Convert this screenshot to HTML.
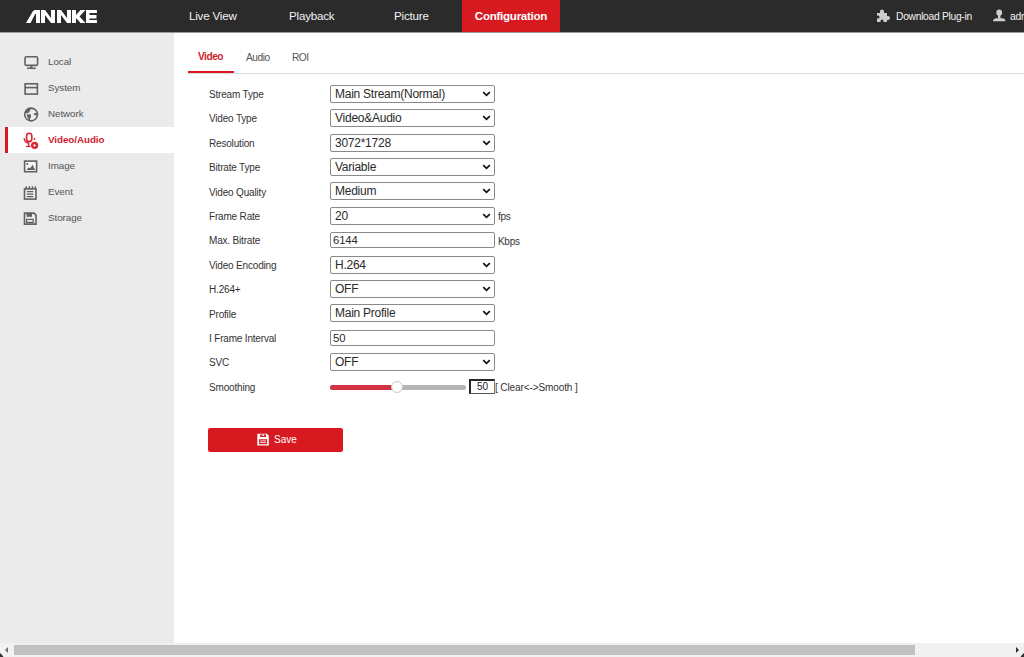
<!DOCTYPE html>
<html><head><meta charset="utf-8">
<style>
*{margin:0;padding:0;box-sizing:border-box}
html,body{width:1024px;height:657px;overflow:hidden;background:#fff;font-family:"Liberation Sans",sans-serif}
.abs{position:absolute}
#hdr{position:absolute;left:0;top:0;width:1024px;height:32px;background:#2b2b2b}
.nav{position:absolute;top:0;height:32px;line-height:31px;font-size:11.6px;letter-spacing:-0.2px;color:#f2f2f2;white-space:nowrap}
#cfg{position:absolute;left:462px;top:0;width:98px;height:32px;background:#d71920;color:#fff;font-weight:bold;font-size:11.6px;letter-spacing:-0.28px;line-height:31px;text-align:center}
#side{position:absolute;left:0;top:32px;width:174px;height:611px;background:#ebebeb}
.si{position:absolute;left:5px;width:169px;height:26px}
.si .t{position:absolute;left:43px;top:0;line-height:26px;font-size:9.8px;letter-spacing:-0.05px;color:#555}
.si.act{background:#fff;border-left:3px solid #d71920}
.si.act .t{color:#d0202e;left:40px;font-weight:bold}
.tab{position:absolute;font-size:10.2px;letter-spacing:-0.5px;color:#555;white-space:nowrap}
.lbl{position:absolute;left:209px;font-size:10px;letter-spacing:-0.18px;color:#333;white-space:nowrap}
.sel{position:absolute;left:330px;width:165px;height:18px;border:1px solid #8a8a8a;border-radius:2px;background:#fff}
.sel span{position:absolute;left:4px;top:0;line-height:16px;font-size:12px;letter-spacing:-0.25px;color:#2a2a2a;white-space:nowrap}
.sel svg{position:absolute;right:3px;top:4.5px}
.inp{position:absolute;left:330px;width:165px;height:16px;border:1px solid #8a8a8a;border-radius:2px;background:#fff}
.inp span{position:absolute;left:2px;top:0px;line-height:14px;font-size:11.3px;letter-spacing:-0.1px;color:#2a2a2a}
.unit{position:absolute;left:498px;font-size:10px;letter-spacing:-0.3px;color:#333;white-space:nowrap}
</style></head><body>
<div id="hdr">
  <svg class="abs" style="left:0;top:0" width="110" height="32" viewBox="0 0 110 32">
    <g fill="#fff">
      <path d="M26 23 L33 11 Q34 10 35.5 10 L40 10 L40 23 L36 23 L36 14 L35.2 14 L30.5 23 Z"/>
      <path d="M41 10 L45 10 L51 18 L51 10 L55 10 L55 23 L51 23 L45 15 L45 23 L41 23 Z"/>
      <path d="M57 10 L61 10 L67 18 L67 10 L71 10 L71 23 L67 23 L61 15 L61 23 L57 23 Z"/>
      <path d="M72 10 L76 10 L76 15 L80.5 10 L85.5 10 L79.5 16.5 L85.5 23 L80.5 23 L76 18 L76 23 L72 23 Z"/>
      <path d="M86 10 L97 10 L97 13 L89.5 13 L89.5 15 L96.5 15 L96.5 18.5 L89.5 18.5 L89.5 20 L97 20 L97 23 L86 23 Z"/>
    </g>
  </svg>
  <div class="nav" style="left:189px">Live View</div>
  <div class="nav" style="left:289px">Playback</div>
  <div class="nav" style="left:394px">Picture</div>
  <div id="cfg">Configuration</div>
  <svg class="abs" style="left:876px;top:9px" width="15" height="14" viewBox="0 0 15 14">
    <path fill="#cdcdcd" d="M1 4 H4 V2.5 A2 2 0 0 1 8 2.5 V4 H11 V7 H12 A2 2 0 0 1 12 11 H11 V13 H7.5 V12 A1.5 1.5 0 0 0 4.5 12 V13 H1 V9.5 H2 A1.5 1.5 0 0 0 2 6.5 H1 Z"/>
  </svg>
  <div class="nav" style="left:896px;font-size:10.3px;letter-spacing:-0.3px;line-height:33px">Download Plug-in</div>
  <svg class="abs" style="left:992px;top:9px" width="15" height="14" viewBox="0 0 15 14">
    <ellipse cx="7.2" cy="3.6" rx="2.9" ry="3.2" fill="#cfcfcf"/><rect x="6" y="5" width="2.4" height="4.5" fill="#cfcfcf"/><path fill="#cfcfcf" d="M1 12.2 Q1 9.6 4.5 9.2 L10 9.2 Q13.4 9.6 13.4 12.2 Z"/>
  </svg>
  <div class="nav" style="left:1010px;font-size:10.3px;line-height:33px">admin</div>
</div>
<div id="side">
  <div class="si" style="top:17px"><div class="t">Local</div></div>
  <div class="si" style="top:43px"><div class="t">System</div></div>
  <div class="si" style="top:69px"><div class="t">Network</div></div>
  <div class="si act" style="top:95px"><div class="t">Video/Audio</div></div>
  <div class="si" style="top:121px"><div class="t">Image</div></div>
  <div class="si" style="top:147px"><div class="t">Event</div></div>
  <div class="si" style="top:173px"><div class="t">Storage</div></div>
</div>
<svg class="abs" style="left:0;top:0" width="60" height="240" viewBox="0 0 60 240">
  <g fill="none" stroke="#655f5f" stroke-width="1.6">
    <rect x="25" y="56.8" width="12.6" height="8.6" rx="1.5"/>
    <path d="M31.4 65.4 V68 " stroke-width="2"/><path d="M27 68.3 H35.8" stroke-width="1.5"/>
    <rect x="25.1" y="83.8" width="12.3" height="10.3"/>
    <path d="M25.1 87.6 H37.4"/>
    <circle cx="31.1" cy="114.5" r="6.4"/>
    <rect x="24.6" y="161.1" width="12" height="10.6" fill="#f6f6f6"/>
    <rect x="24.5" y="188.9" width="11.5" height="10.2"/>
    <path d="M26.9 191.6 H33.2 M26.9 194.2 H33.2 M26.9 196.7 H33.2" stroke-width="1.2"/>
    <path d="M24.5 213.1 H34 L36 215.1 V224.1 H24.5 Z"/>
    <rect x="26.6" y="219.4" width="6.6" height="3" stroke-width="1.2"/>
  </g>
  <g fill="#655f5f">
    <path d="M25.3 112.8 Q25.5 109 28.5 108 L31.2 107.8 L30.6 109.6 L29.3 111.9 L27.6 113.4 Z"/>
    <path d="M26.8 114.5 L30.8 114.2 L31.1 116.8 L30.1 118.5 L29.8 120.9 L28.6 120.9 L28.2 118.3 L27 116.6 Z"/>
    <path d="M33.5 114.2 L35 113 L37.6 113 L37.6 115.4 L35.2 115.2 Z"/>
    <path d="M26.6 170 L28.6 167.2 L30.2 168.2 L32.6 164.8 L35.2 170 Z"/>
    <circle cx="27.3" cy="163.9" r="1"/>
    <path d="M25.5 186.2 h1.4 v2.7 h-1.4 Z M28.6 186.2 h1.4 v2.7 h-1.4 Z M31.7 186.2 h1.4 v2.7 h-1.4 Z M34.6 186.2 h1.4 v2.7 h-1.4 Z"/>
    <path d="M26.6 213.2 H32 V216.8 H26.6 Z"/>
  </g>
  <g fill="none" stroke="#d9262e">
    <rect x="26.6" y="133.2" width="5.2" height="8.4" rx="2.6" stroke-width="1.6"/>
    <path d="M24.2 138.3 Q24.4 142.6 28.8 143" stroke-width="1.5"/>
    <path d="M28.6 142.8 V146.2" stroke-width="1.5"/>
    <path d="M25.9 146.5 H30.6" stroke-width="1.2"/>
  </g>
  <g fill="#d9262e">
    <circle cx="34.4" cy="139" r="0.9"/>
    <circle cx="34.6" cy="145.3" r="3.6"/>
  </g>
  <path d="M33.6 143.8 L36.3 145.4 L33.6 147 Z" fill="#fff"/>
</svg>
<div class="tab" style="left:198px;top:51px;color:#d0202e;font-weight:bold">Video</div>
<div class="tab" style="left:246px;top:52px">Audio</div>
<div class="tab" style="left:292px;top:52px">ROI</div>
<div class="abs" style="left:188px;top:73px;width:836px;height:1px;background:#dcdcdc"></div>
<div class="abs" style="left:188px;top:71px;width:46px;height:2px;background:#d71920"></div>
<div class="lbl" style="top:89.00px">Stream Type</div>
<div class="sel" style="top:85px"><span>Main Stream(Normal)</span><svg width="9" height="6" viewBox="0 0 9 6"><path d="M1.2 1.2 L4.5 4.3 L7.8 1.2" fill="none" stroke="#111" stroke-width="1.7"/></svg></div>
<div class="lbl" style="top:113.39px">Video Type</div>
<div class="sel" style="top:109px"><span>Video&amp;Audio</span><svg width="9" height="6" viewBox="0 0 9 6"><path d="M1.2 1.2 L4.5 4.3 L7.8 1.2" fill="none" stroke="#111" stroke-width="1.7"/></svg></div>
<div class="lbl" style="top:137.78px">Resolution</div>
<div class="sel" style="top:134px"><span>3072*1728</span><svg width="9" height="6" viewBox="0 0 9 6"><path d="M1.2 1.2 L4.5 4.3 L7.8 1.2" fill="none" stroke="#111" stroke-width="1.7"/></svg></div>
<div class="lbl" style="top:162.17px">Bitrate Type</div>
<div class="sel" style="top:158px"><span>Variable</span><svg width="9" height="6" viewBox="0 0 9 6"><path d="M1.2 1.2 L4.5 4.3 L7.8 1.2" fill="none" stroke="#111" stroke-width="1.7"/></svg></div>
<div class="lbl" style="top:186.56px">Video Quality</div>
<div class="sel" style="top:182px"><span>Medium</span><svg width="9" height="6" viewBox="0 0 9 6"><path d="M1.2 1.2 L4.5 4.3 L7.8 1.2" fill="none" stroke="#111" stroke-width="1.7"/></svg></div>
<div class="lbl" style="top:210.95px">Frame Rate</div>
<div class="sel" style="top:207px"><span>20</span><svg width="9" height="6" viewBox="0 0 9 6"><path d="M1.2 1.2 L4.5 4.3 L7.8 1.2" fill="none" stroke="#111" stroke-width="1.7"/></svg></div>
<div class="lbl" style="top:235.34px">Max. Bitrate</div>
<div class="inp" style="top:232px"><span>6144</span></div>
<div class="lbl" style="top:259.73px">Video Encoding</div>
<div class="sel" style="top:256px"><span>H.264</span><svg width="9" height="6" viewBox="0 0 9 6"><path d="M1.2 1.2 L4.5 4.3 L7.8 1.2" fill="none" stroke="#111" stroke-width="1.7"/></svg></div>
<div class="lbl" style="top:284.12px">H.264+</div>
<div class="sel" style="top:280px"><span>OFF</span><svg width="9" height="6" viewBox="0 0 9 6"><path d="M1.2 1.2 L4.5 4.3 L7.8 1.2" fill="none" stroke="#111" stroke-width="1.7"/></svg></div>
<div class="lbl" style="top:308.51px">Profile</div>
<div class="sel" style="top:304px"><span>Main Profile</span><svg width="9" height="6" viewBox="0 0 9 6"><path d="M1.2 1.2 L4.5 4.3 L7.8 1.2" fill="none" stroke="#111" stroke-width="1.7"/></svg></div>
<div class="lbl" style="top:332.90px">I Frame Interval</div>
<div class="inp" style="top:330px"><span>50</span></div>
<div class="lbl" style="top:357.29px">SVC</div>
<div class="sel" style="top:353px"><span>OFF</span><svg width="9" height="6" viewBox="0 0 9 6"><path d="M1.2 1.2 L4.5 4.3 L7.8 1.2" fill="none" stroke="#111" stroke-width="1.7"/></svg></div>
<div class="lbl" style="top:381.68px">Smoothing</div>
<div class="unit" style="top:211px">fps</div>
<div class="unit" style="top:235.6px">Kbps</div>
<div class="abs" style="left:330px;top:385px;width:136px;height:5px;border-radius:3px;background:#b5b5b5"></div>
<div class="abs" style="left:330px;top:385px;width:68px;height:5px;border-radius:3px 0 0 3px;background:#d43343"></div>
<div class="abs" style="left:391px;top:381px;width:12px;height:12px;border-radius:6px;background:#fff;border:1px solid #c8c8c8"></div>
<div class="abs" style="left:469px;top:379px;width:26px;height:15px;border-style:solid;border-width:2px 1px 1px 2px;border-color:#262626 #808080 #555 #262626;font-size:10px;line-height:12px;text-align:center;color:#222;letter-spacing:-0.1px">50</div>
<div class="abs" style="left:495px;top:382px;font-size:10px;letter-spacing:-0.1px;color:#333;white-space:nowrap">[ Clear&lt;-&gt;Smooth ]</div>
<div class="abs" style="left:208px;top:428px;width:135px;height:24px;border-radius:2px;background:#d71920"></div>
<svg class="abs" style="left:256px;top:433px" width="14" height="13" viewBox="0 0 14 13">
  <path fill="#fff" d="M1.3 0.7 H10.8 L12.8 2.7 V12.5 H1.3 Z"/>
  <path fill="#d71920" d="M4.2 1.5 H10 V4.1 H4.2 Z M3.1 6.2 H11.1 V11.2 H3.1 Z"/>
  <path fill="#fff" d="M6.5 1.5 H7.9 V3.1 H6.5 Z M4.2 7.6 H10 V8.3 H4.2 Z M3.9 9.3 H10.3 V10 H3.9 Z"/>
</svg>
<div class="abs" style="left:274px;top:434px;font-size:10px;color:#fff">Save</div>
<div class="abs" style="left:0;top:643px;width:1024px;height:14px;background:#f1f1f1"></div>
<div class="abs" style="left:14px;top:645px;width:901px;height:10px;background:#c1c1c1"></div>
<svg class="abs" style="left:0;top:643px" width="1024" height="14" viewBox="0 0 1024 14">
  <path d="M8 4 L5 7 L8 10 Z" fill="#6e6e6e"/><path d="M0 10 Q2.5 12 3.5 14 H0 Z" fill="#333"/>
  <path d="M1016 4 L1019 7 L1016 10 Z" fill="#333"/><path d="M1024 10 Q1021.5 12 1020.5 14 H1024 Z" fill="#333"/>
</svg>
<div class="abs" style="left:0;top:32px;width:1024px;height:1px;background:#9a9a9a"></div>
</body></html>
